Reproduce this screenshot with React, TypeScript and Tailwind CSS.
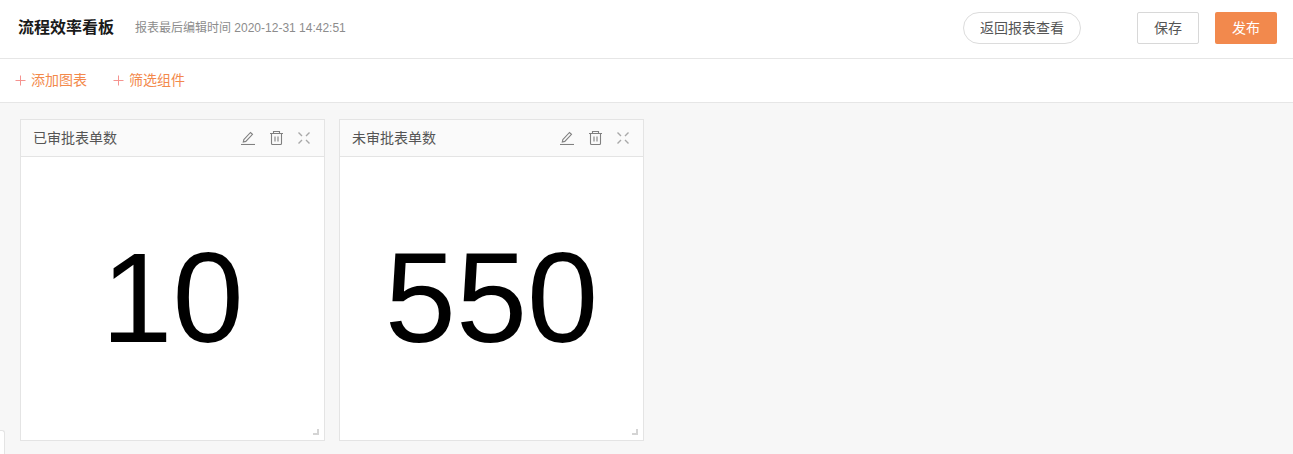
import React from "react";

const Plus = () => (
  <svg width="11" height="11" viewBox="0 0 11 11" className="shrink-0" fill="none" stroke="#f5938f" strokeWidth="1">
    <path d="M5.5 0.500v10M0.500 5.500h10" />
  </svg>
);

const EditIcon = () => (
  <svg width="14" height="14" viewBox="0 0 14 14" fill="none" stroke="#808080" strokeWidth="1.100">
    <path d="M2.800 8.700 9.500 1.500l2 1.800-6.700 7.100-2.500.7z" />
    <path d="M0 13.500h14" />
  </svg>
);

const TrashIcon = () => (
  <svg width="13" height="14" viewBox="0 0 13 14" fill="none" stroke="#808080" strokeWidth="1.100">
    <path d="M0 2.500h13M3.500 2.500V.5h6v2M1.500 2.500v10a1 1 0 0 0 1 1h8a1 1 0 0 0 1-1v-10M5 5.500v5M8 5.500v5" />
  </svg>
);

const ExpandIcon = () => (
  <svg width="12" height="12" viewBox="0 0 12 12" fill="none" stroke="#a8a8a8" strokeWidth="1.400">
    <path d="M.5.500l3.500 3.500M11.500.500 8 4M.5 11.500 4 8M11.500 11.500 8 8" />
  </svg>
);

const Card = ({ title, value }: { title: string; value: string }) => (
  <div className="relative flex h-[322px] w-[305px] flex-col border border-[#e4e4e4] bg-white">
    <div className="flex h-[37px] items-center justify-between border-b border-[#e4e4e4] bg-[#fafafa] pl-3 pr-[14px]">
      <span className="text-sm text-[#555]">{title}</span>
      <div className="flex items-center gap-[15px]">
        <EditIcon />
        <TrashIcon />
        <ExpandIcon />
      </div>
    </div>
    <div className="flex flex-1 items-center justify-center pb-[2px] text-9xl leading-none text-black">{value}</div>
    <div className="absolute bottom-[5px] right-[5px] h-[6px] w-[6px] border-b-2 border-r-2 border-[#d4d4d4]" />
  </div>
);

export default function App() {
  return (
    <div className="relative flex h-[454px] w-[1293px] flex-col overflow-hidden bg-[#f7f7f7] font-['Liberation_Sans','Noto_Sans_CJK_SC',sans-serif]">
      <header className="flex h-[59px] items-center border-b border-[#e6e6e6] bg-white pb-[2px] pl-[18px] pr-4">
        <h1 className="text-base font-bold text-[#1a1a1a]">流程效率看板</h1>
        <span className="ml-[21px] text-xs text-[#8c8c8c]">报表最后编辑时间 2020-12-31 14:42:51</span>
        <button className="ml-auto h-8 w-[118px] rounded-full border border-[#dcdcdc] text-sm text-[#555]">返回报表查看</button>
        <button className="ml-[56px] h-8 w-[62px] rounded-[2px] border border-[#d8d8d8] text-sm text-[#555]">保存</button>
        <button className="ml-4 h-8 w-[62px] rounded-[2px] bg-[#f2894d] text-sm text-white">发布</button>
      </header>
      <div className="flex h-[44px] items-center gap-[26px] border-b border-[#e6e6e6] bg-white pb-px pl-[15px]">
        <button className="flex items-center gap-[5px] text-sm text-[#f3894b]"><Plus />添加图表</button>
        <button className="flex items-center gap-[5px] text-sm text-[#f3894b]"><Plus />筛选组件</button>
      </div>
      <main className="flex gap-[14px] pl-5 pt-4">
        <Card title="已审批表单数" value="10" />
        <Card title="未审批表单数" value="550" />
      </main>
      <div className="absolute bottom-0 left-0 h-6 w-[5px] rounded-tr-[3px] border-r border-t border-[#e4e4e4] bg-white" />
    </div>
  );
}
